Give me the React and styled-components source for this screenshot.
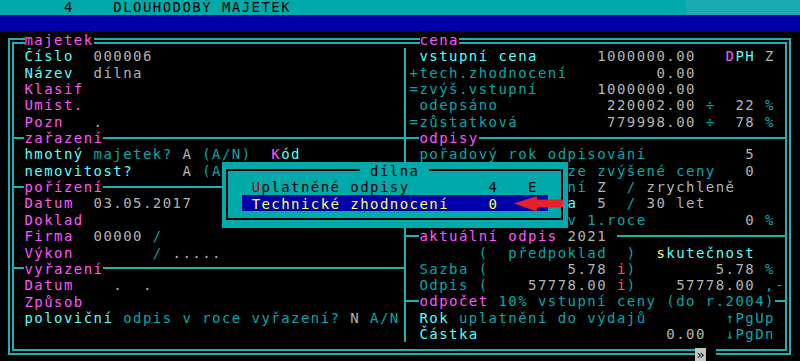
import React from 'react';
import styled, { createGlobalStyle } from 'styled-components';

const COL = 9.875;
const ROW = 16.35;
const LINE = '#1cb2b2';
const FONT = 14;
const ADV = FONT * 0.6021;

const colors = {
  C: '#00aaaa',
  B: '#55ffff',
  M: '#ff55ff',
  G: '#b4b4b4',
  Y: '#ffff55',
  R: '#ff5555',
};

const GlobalStyle = createGlobalStyle`
  html, body { margin: 0; padding: 0; background: #000; }
  body { width: 800px; height: 361px; overflow: hidden; }
`;

const Screen = styled.div`
  position: relative;
  width: 800px;
  height: 361px;
  overflow: hidden;
  background: #000;
  font-family: "DejaVu Sans Mono", "Liberation Mono", monospace;
  font-size: ${FONT}px;
  letter-spacing: ${COL - ADV}px;
`;

const TitleBar = styled.div`
  display: flex;
  height: 15px;
  background: #00aaaa;
`;

const TitleText = styled.div`
  flex: 1;
  padding-left: 4.75px;
  line-height: 15px;
  color: #000;
  white-space: pre;
`;

const TitleTail = styled.div`
  width: 114px;
  background: #1caab2;
`;

const MenuBar = styled.div`
  height: 17px;
  background: #0000a8;
`;

const Frame = styled.div`
  position: relative;
  margin: 6px 0 0 8px;
  width: 783px;
  height: 317px;
  box-sizing: border-box;
  border: 2px solid ${LINE};
  padding: 2px;
`;

const InnerFrame = styled.div`
  height: 100%;
  box-sizing: border-box;
  border: 2px solid ${LINE};
  padding-top: 3.7px;
  display: flex;
  align-items: flex-start;
`;

const Pane = styled.div`
  box-sizing: border-box;
  height: ${18 * ROW}px;
  padding-left: ${(p) => p.$pad}px;
  ${(p) => (p.$divider ? `border-left: 2px solid ${LINE}; flex: 1;` : 'width: 390px;')}
`;

const Line = styled.div`
  height: ${ROW}px;
  line-height: ${ROW}px;
  padding-top: 0.7px;
  box-sizing: border-box;
  white-space: pre;
`;

const Txt = styled.span`
  color: ${(p) => colors[p.$c] || colors.G};
`;

const Head = styled.div`
  display: flex;
  align-items: center;
  height: ${ROW}px;
  margin-left: -${(p) => p.$pad}px;
`;

const HeadLabel = styled.div`
  line-height: ${ROW}px;
  padding-top: 0.7px;
  white-space: pre;
`;

const Rule = styled.div`
  height: 2px;
  background: ${LINE};
  ${(p) => (p.$grow ? 'flex: 1;' : `width: ${p.$w}px;`)}
`;

const BorderLabel = styled.div`
  position: absolute;
  top: -8.6px;
  left: ${(p) => p.$x}px;
  height: ${ROW}px;
  line-height: ${ROW}px;
  padding-top: 0.7px;
  box-sizing: border-box;
  background: #000;
  color: ${colors.M};
  white-space: pre;
`;

const Popup = styled.div`
  position: absolute;
  left: 222px;
  top: 162.2px;
  width: ${35 * COL}px;
  height: ${4 * ROW}px;
  box-sizing: border-box;
  background: #00aaaa;
  padding: 7.2px 4.6px 7.1px 4px;
`;

const PopupFrame = styled.div`
  position: relative;
  height: 100%;
  box-sizing: border-box;
  border: 2px solid #000;
  padding: 7.15px 0 0 13.75px;
`;

const PopupTitle = styled.div`
  position: absolute;
  top: -9.2px;
  left: 132.25px;
  height: ${ROW}px;
  line-height: ${ROW}px;
  padding-top: 0.7px;
  box-sizing: border-box;
  background: #00aaaa;
  color: #000;
  white-space: pre;
`;

const Item = styled.div`
  width: ${31 * COL}px;
  height: ${ROW}px;
  line-height: ${ROW}px;
  padding-top: 0.7px;
  box-sizing: border-box;
  padding-left: ${COL}px;
  white-space: pre;
  background: ${(p) => (p.$active ? '#0000aa' : 'transparent')};
  color: ${(p) => (p.$active ? '#ffff55' : '#000')};
`;

const Hot = styled.span`
  color: #aa0000;
`;

const Arrow = styled.svg`
  position: absolute;
  left: 512px;
  top: 193px;
  width: 53px;
  height: 20px;
`;

const BottomMark = styled.div`
  position: absolute;
  left: 695px;
  top: 348px;
  display: flex;
  align-items: flex-start;
`;

const Knob = styled.div`
  width: 11px;
  height: 13px;
  background: #c4c4c4;
  color: #111;
  font-size: 13px;
  letter-spacing: 0;
  line-height: 13px;
  text-align: center;
`;

const Gap = styled.div`
  width: 10px;
  height: 9px;
  background: #000;
`;

const leftRows = [
  [[' '], ['Číslo', 'B'], ['  '], ['000006', 'G']],
  [[' '], ['Název', 'B'], ['  '], ['dílna', 'G']],
  [[' '], ['Klasif', 'M']],
  [[' '], ['Umíst.', 'M']],
  [[' '], ['Pozn', 'M'], ['   '], ['.', 'G']],
  { head: [['zařazení', 'M']] },
  [[' '], ['hmotný', 'B'], [' majetek?', 'C'], [' '], ['A', 'G'], [' '], ['(A/N)', 'C'], ['  '], ['K', 'M'], ['ód', 'B']],
  [[' '], ['nemovitost?', 'B'], ['     '], ['A', 'G'], [' '], ['(A', 'C']],
  { head: [['pořízení', 'M']] },
  [[' '], ['Datum', 'M'], ['  '], ['03.05.2017', 'G']],
  [[' '], ['Doklad', 'M']],
  [[' '], ['Firma', 'M'], ['  '], ['00000', 'G'], [' '], ['/', 'C']],
  [[' '], ['Výkon', 'M'], ['        '], ['/', 'C'], [' '], ['.....', 'G']],
  { head: [['vyřazení', 'M']] },
  [[' '], ['Datum', 'M'], ['    '], ['.', 'G'], ['  '], ['.', 'G']],
  [[' '], ['Způsob', 'M']],
  [[' '], ['poloviční', 'B'], [' odpis v roce vyřazení?', 'C'], [' '], ['N', 'G'], [' '], ['A/N', 'C']],
  [[' ']],
];

const HID = '                ';

const rightRows = [
  [[' '], ['vstupní cena', 'B'], ['      '], ['1000000.00', 'G'], ['   '], ['D', 'M'], ['PH', 'B'], [' '], ['Z', 'G']],
  [['+tech.zhodnocení', 'C'], ['         '], ['0.00', 'G']],
  [['=zvýš.vstupní', 'C'], ['      '], ['1000000.00', 'G']],
  [[' '], ['odepsáno', 'C'], ['           '], ['220002.00', 'G'], [' '], ['÷', 'C'], ['  '], ['22', 'G'], [' '], ['%', 'C']],
  [['=zůstatková', 'C'], ['         '], ['779998.00', 'G'], [' '], ['÷', 'C'], ['  '], ['78', 'G'], [' '], ['%', 'C']],
  { head: [['odpisy', 'M']] },
  [[' '], ['pořadový rok odpisování', 'C'], ['          '], ['5', 'G']],
  [[HID], ['ze zvýšené ceny', 'C'], ['   '], ['0', 'G']],
  [[HID], ['ní', 'C'], [' '], ['Z', 'G'], ['  '], ['/', 'C'], [' '], ['zrychleně', 'G']],
  [[HID], ['a', 'B'], ['  '], ['5', 'G'], ['  '], ['/', 'C'], [' '], ['30 let', 'G']],
  [[HID], ['v 1.roce', 'C'], ['          '], ['0', 'G'], [' '], ['%', 'C']],
  { head: [['aktuální odpis', 'M'], [' '], ['2021', 'G'], [' ']] },
  [['       '], ['(', 'C'], ['  '], ['předpoklad', 'C'], ['  '], [')', 'C'], ['  '], ['s', 'Y'], ['kutečnost', 'B']],
  [[' '], ['Sazba (', 'C'], ['        '], ['5.78', 'G'], [' '], ['i', 'R'], [')', 'C'], ['        '], ['5.78', 'G'], [' '], ['%', 'C']],
  [[' '], ['Odpis (', 'C'], ['    '], ['57778.00', 'G'], [' '], ['i', 'R'], [')', 'C'], ['    '], ['57778.00', 'G'], [' '], [',-', 'C']],
  { head: [['odpočet', 'M'], [' 10% vstupní ceny (do r.2004)', 'C']] },
  [[' '], ['Rok', 'B'], [' uplatnění do výdajů', 'C'], ['        '], ['↑PgUp', 'C']],
  [[' '], ['Částka', 'B'], ['                   '], ['0.00', 'G'], ['  '], ['↓PgDn', 'C']],
];

const Segs = ({ segs }) =>
  segs.map(([t, c], i) => (
    <Txt key={i} $c={c}>
      {t}
    </Txt>
  ));

const PaneRows = ({ rows, pad }) =>
  rows.map((r, i) =>
    r.head ? (
      <Head key={i} $pad={pad}>
        <Rule $w={pad + COL} />
        <HeadLabel>
          <Segs segs={r.head} />
        </HeadLabel>
        <Rule $grow />
      </Head>
    ) : (
      <Line key={i}>
        <Segs segs={r} />
      </Line>
    )
  );

export default function App() {
  return (
    <>
      <GlobalStyle />
      <Screen>
        <TitleBar>
          <TitleText>{'      4    DLOUHODOBÝ MAJETEK'}</TitleText>
          <TitleTail />
        </TitleBar>
        <MenuBar />
        <Frame>
          <BorderLabel $x={14.5}>majetek</BorderLabel>
          <BorderLabel $x={409.5}>cena</BorderLabel>
          <InnerFrame>
            <Pane $pad={0.6}>
              <PaneRows rows={leftRows} pad={0.6} />
            </Pane>
            <Pane $pad={3.6} $divider>
              <PaneRows rows={rightRows} pad={3.6} />
            </Pane>
          </InnerFrame>
        </Frame>
        <Popup>
          <PopupFrame>
            <PopupTitle>{' dílna '}</PopupTitle>
            <Item>
              <Hot>U</Hot>
              {'platněné odpisy        4   E'}
            </Item>
            <Item $active>{'Technické zhodnocení    0'}</Item>
          </PopupFrame>
        </Popup>
        <Arrow viewBox="0 0 53 20">
          <polygon points="2,10.5 25,3 25,6.5 51,6.5 51,14.5 25,14.5 25,18.5" fill="#e8202a" />
        </Arrow>
        <BottomMark>
          <Knob>»</Knob>
          <Gap />
        </BottomMark>
      </Screen>
    </>
  );
}
